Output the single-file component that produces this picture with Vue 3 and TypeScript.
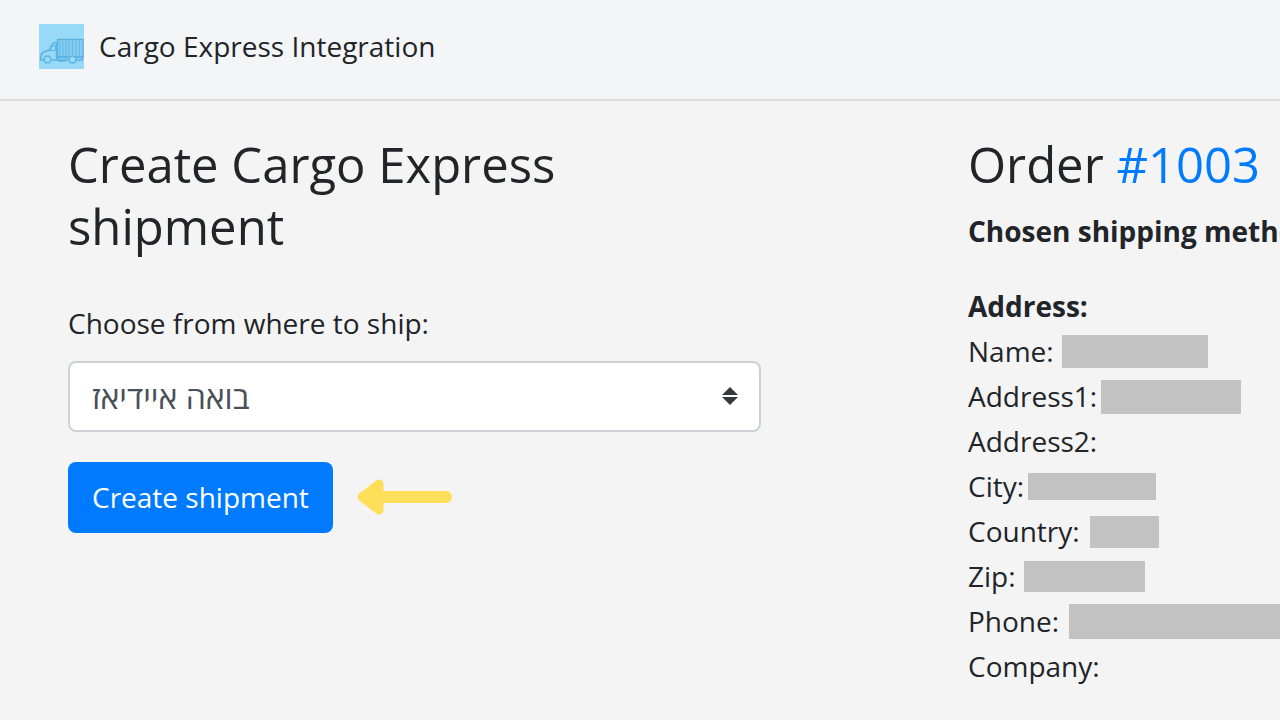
<script setup lang="ts">
import { ref } from 'vue'

interface AddressField {
  label: string
  width?: number
  height?: number
  gap?: 'tight' | 'normal' | 'wide'
}

const origin = ref('boa')

const fields: AddressField[] = [
  { label: 'Name:', width: 146, height: 33, gap: 'normal' },
  { label: 'Address1:', width: 140, height: 34, gap: 'tight' },
  { label: 'Address2:' },
  { label: 'City:', width: 128, height: 27, gap: 'tight' },
  { label: 'Country:', width: 69, height: 32, gap: 'wide' },
  { label: 'Zip:', width: 121, height: 31, gap: 'normal' },
  { label: 'Phone:', width: 240, height: 35, gap: 'wide' },
  { label: 'Company:' },
]
</script>

<template>
  <div class="page">
    <header class="navbar">
      <svg class="logo" viewBox="0 0 45 45" aria-hidden="true">
        <rect width="45" height="45" fill="#97d9f7" />
        <g fill="none" stroke="#5cb3e2" stroke-width="1.4" stroke-linejoin="round">
          <rect x="18.5" y="15.5" width="25.5" height="18" fill="#84cdf1" />
          <path d="M21 17v15M24 17v15M27 17v15M30 17v15M33.5 17v15M37 17v15M40.5 17v15" stroke-width=".8" />
          <path d="M17.5 18.5c-3 0-5.500 2-7 7.500l-6 2c-2 1-3 3-3 8h3.500M17.500 18.500V36" />
          <path d="M11 26.5l3-5h2.500v5z" stroke-width="1" />
          <path d="M12.5 36H30M37 36h6.500v-3H18" />
          <rect x="19.5" y="33" width="7" height="4" />
          <circle cx="8.5" cy="35.5" r="3.5" fill="#97d9f7" />
          <circle cx="33.5" cy="35.5" r="3.5" fill="#97d9f7" />
        </g>
      </svg>
      <span class="brand">Cargo Express Integration</span>
    </header>

    <main class="content">
      <form class="shipment" @submit.prevent>
        <h2>Create Cargo Express shipment</h2>
        <label class="origin-label" for="origin">Choose from where to ship:</label>
        <div class="select-wrap">
          <select id="origin" v-model="origin">
            <option value="boa">בואה איידיאז</option>
          </select>
          <svg class="caret" viewBox="0 0 16 20" aria-hidden="true">
            <path d="M8 1l8 8H0zM8 19l8-8H0z" fill="#343a40" />
          </svg>
        </div>
        <div class="actions">
          <button type="submit">Create shipment</button>
          <svg class="arrow" viewBox="0 0 96 38" aria-hidden="true">
            <path d="M5 18L22 5V31Z" fill="#ffde59" stroke="#ffde59" stroke-width="9" stroke-linejoin="round" />
            <path d="M20 18H89" stroke="#ffde59" stroke-width="12" stroke-linecap="round" />
          </svg>
        </div>
      </form>

      <section class="order">
        <h2>Order <a href="#1003">#1003</a></h2>
        <p class="method"><strong>Chosen shipping method:</strong></p>
        <p><strong>Address:</strong></p>
        <ul>
          <li v-for="field in fields" :key="field.label">
            <span>{{ field.label }}</span>
            <span
              v-if="field.width"
              class="redacted"
              :class="field.gap"
              :style="{ width: field.width + 'px', height: field.height + 'px' }"
            ></span>
          </li>
        </ul>
      </section>
    </main>
  </div>
</template>

<style>
body {
  margin: 0;
  background: #f4f4f4;
}
</style>

<style scoped>
.page {
  box-sizing: border-box;
  min-height: 100vh;
  overflow: hidden;
  background: #f4f4f4;
  color: #212529;
  font-family: "Open Sans", "Noto Sans", sans-serif;
  font-size: 28px;
  line-height: 45px;
}

.navbar {
  display: flex;
  align-items: center;
  gap: 15px;
  padding: 24px 39px 30px;
  border-bottom: 2px solid #dddddf;
  background: #f4f5f7;
}

.logo {
  width: 45px;
  height: 45px;
}

.content {
  display: grid;
  grid-template-columns: minmax(0, 900fr) minmax(0, 312fr);
  padding: 32px 0 30px 68px;
  white-space: nowrap;
}

.shipment {
  width: 77%;
}

h2 {
  margin: 0;
  font-size: 49px;
  font-weight: 400;
  line-height: 62px;
}

.shipment h2 {
  margin-bottom: 44px;
  white-space: normal;
}

.origin-label {
  display: block;
  margin-bottom: 15px;
}

.select-wrap {
  position: relative;
}

select {
  display: block;
  box-sizing: border-box;
  width: 100%;
  height: 71px;
  padding: 0 60px 0 22px;
  appearance: none;
  border: 2px solid #ced0d8;
  border-radius: 8px;
  background: #fff;
  color: #495057;
  font: inherit;
  font-size: 32px;
}

.caret {
  position: absolute;
  top: 25px;
  right: 23px;
  width: 16px;
  height: 20px;
  pointer-events: none;
}

.actions {
  display: flex;
  align-items: center;
  gap: 24px;
  margin-top: 30px;
}

button {
  height: 71px;
  padding: 0 24px;
  border: 0;
  border-radius: 8px;
  background: #007bff;
  color: #fff;
  font: inherit;
}

.arrow {
  width: 96px;
  height: 38px;
}

a {
  color: #007bff;
  text-decoration: none;
}

p,
ul {
  margin: 0;
  padding: 0;
}

.method {
  margin: 14px 0 30px;
}

li {
  display: flex;
  align-items: center;
  height: 45px;
}

.redacted {
  flex: none;
  background: #c2c2c2;
}

.tight {
  margin-left: 4px;
}

.normal {
  margin-left: 8px;
}

.wide {
  margin-left: 10px;
}
</style>
